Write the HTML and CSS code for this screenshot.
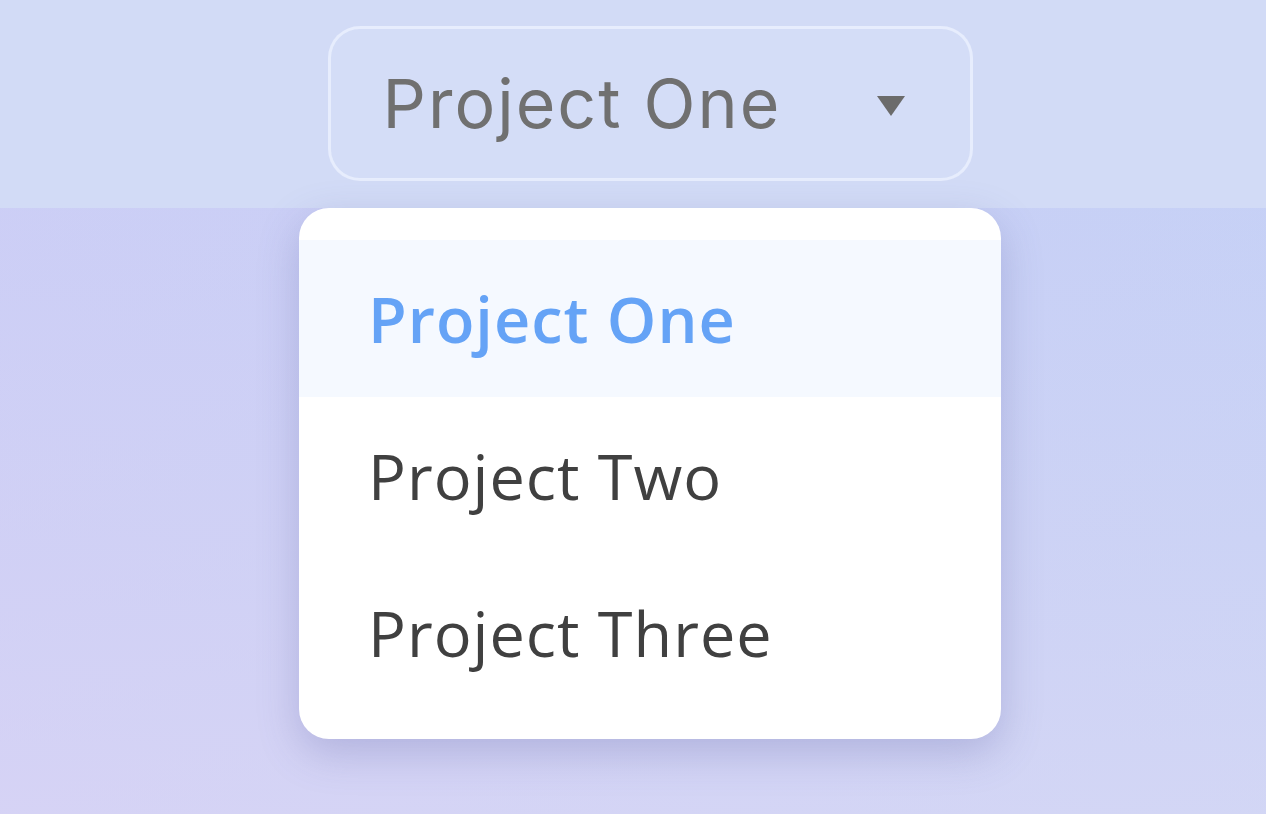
FILE: index.html
```html
<!DOCTYPE html>
<html lang="en">
<head>
<meta charset="utf-8">
<title>Project selector</title>
<link rel="stylesheet" href="styles.css">
</head>
<body>
  <div class="page">
    <header class="topbar">
      <button class="select" type="button">
        <span class="select-label">Project One</span>
        <svg class="caret" width="30" height="21" viewBox="0 0 30 21" aria-hidden="true"><polygon points="1,1 29,1 15,21" fill="#6b6b6b"/></svg>
      </button>
    </header>
    <main class="stage">
      <ul class="menu">
        <li class="item active">Project One</li>
        <li class="item">Project Two</li>
        <li class="item">Project Three</li>
      </ul>
    </main>
  </div>
</body>
</html>
```
FILE: styles.css
```css
* { box-sizing: border-box; }
html, body { margin: 0; padding: 0; }
body {
  width: 1266px;
  height: 814px;
  overflow: hidden;
  background: #d2dcf6;
  font-family: "Open Sans", "Noto Sans", sans-serif;
}
.page { height: 100%; display: flex; flex-direction: column; }
.topbar {
  height: 208px;
  background: #d2dbf6;
  display: flex;
  justify-content: center;
  padding-top: 26px;
  padding-left: 34px;
}
.select {
  width: 645px;
  height: 155px;
  border: 3px solid rgba(236, 242, 255, 0.75);
  border-radius: 32px;
  background: rgba(214, 224, 248, 0.5);
  display: flex;
  align-items: center;
  justify-content: space-between;
  padding: 0 64px 0 52px;
  font-family: "Inter", "Lato", sans-serif;
  font-size: 68px;
  font-weight: 400;
  color: #707070;
  cursor: pointer;
}
.select-label { letter-spacing: 2px; margin-top: -2px; }
.caret { display: block; margin-top: 4px; }
.stage {
  flex: 1;
  display: flex;
  justify-content: center;
  padding-left: 34px;
  background:
    linear-gradient(90deg, rgba(215, 205, 245, 0.35), rgba(200, 215, 245, 0.2)),
    linear-gradient(180deg, #c6cff6 0%, #cdd2f5 55%, #d5d6f5 100%);
}
.menu {
  list-style: none;
  margin: 0;
  width: 702px;
  height: 531px;
  padding: 32px 0 28px;
  background: #ffffff;
  border-radius: 30px;
  box-shadow: 0 14px 40px rgba(90, 95, 160, 0.28);
}
.item {
  height: 157px;
  display: flex;
  align-items: center;
  padding-left: 69px;
  font-size: 63px;
  letter-spacing: 1px;
  color: #404040;
  font-weight: 400;
}
.item.active {
  background: #f5f9ff;
  color: #65a3f6;
  font-weight: 600;
}
```
